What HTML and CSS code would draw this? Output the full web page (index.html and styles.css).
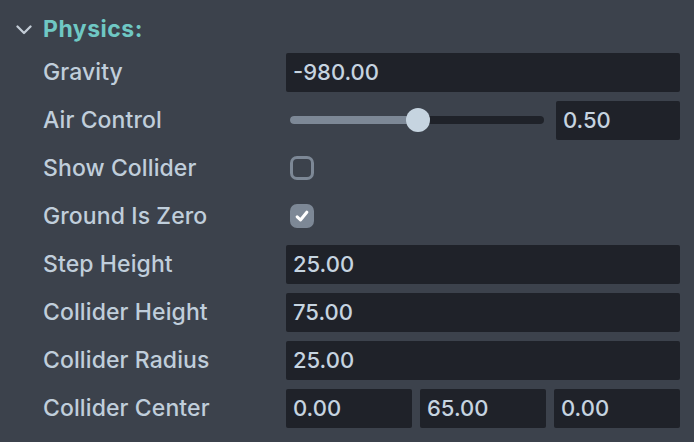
FILE: index.html
```html
<!DOCTYPE html>
<html>
<head>
<meta charset="utf-8">
<link rel="stylesheet" href="styles.css">
</head>
<body>
<div class="panel">
  <div class="header">
    <svg class="chevron" width="16" height="10" viewBox="0 0 16 10"><path d="M1.5 1.5 L8 8 L14.5 1.5" fill="none" stroke="#c3ccd6" stroke-width="2.3" stroke-linecap="round" stroke-linejoin="round"/></svg>
    <span class="title">Physics:</span>
  </div>
  <div class="rows">
    <div class="row">
      <div class="label">Gravity</div>
      <div class="control"><div class="field">-980.00</div></div>
    </div>
    <div class="row">
      <div class="label">Air Control</div>
      <div class="control">
        <div class="slider">
          <div class="track"><div class="fill" style="width:50.4%"></div><div class="thumb" style="left:50.4%"></div></div>
        </div>
        <div class="field small">0.50</div>
      </div>
    </div>
    <div class="row">
      <div class="label">Show Collider</div>
      <div class="control"><div class="check"></div></div>
    </div>
    <div class="row">
      <div class="label">Ground Is Zero</div>
      <div class="control"><div class="check checked"><svg width="14" height="12" viewBox="0 0 14 12"><path d="M2.2 6.8 L5.5 10 L11.8 2.2" fill="none" stroke="#ffffff" stroke-width="3" stroke-linecap="round" stroke-linejoin="round"/></svg></div></div>
    </div>
    <div class="row">
      <div class="label">Step Height</div>
      <div class="control"><div class="field">25.00</div></div>
    </div>
    <div class="row">
      <div class="label">Collider Height</div>
      <div class="control"><div class="field">75.00</div></div>
    </div>
    <div class="row">
      <div class="label">Collider Radius</div>
      <div class="control"><div class="field">25.00</div></div>
    </div>
    <div class="row">
      <div class="label">Collider Center</div>
      <div class="control triple">
        <div class="field">0.00</div>
        <div class="field">65.00</div>
        <div class="field">0.00</div>
      </div>
    </div>
  </div>
</div>
</body>
</html>
```
FILE: styles.css
```css
html, body {
  margin: 0;
  padding: 0;
  background: #3c424c;
}
body {
  font-family: Inter, "Noto Sans", sans-serif;
  color: #c3d1de;
  width: 694px;
  height: 442px;
  overflow: hidden;
}
.panel {
  padding: 12px 14px 0 16px;
}
.header {
  display: flex;
  align-items: center;
  height: 34px;
  margin-bottom: 6px;
}
.chevron {
  display: block;
  margin-right: 11px;
  margin-top: 2px;
}
.title {
  font-weight: 700;
  font-size: 23px;
  letter-spacing: 0.5px;
  color: #6fc8c4;
}
.rows {
  display: flex;
  flex-direction: column;
  gap: 8px;
}
.row {
  display: flex;
  align-items: center;
  height: 40px;
}
.label {
  width: 270px;
  padding-left: 27px;
  box-sizing: border-box;
  font-size: 23px;
  font-weight: 500;
  letter-spacing: 0.1px;
  color: #c0cedb;
}
.control {
  flex: 1;
  display: flex;
  align-items: center;
  gap: 12px;
  height: 40px;
}
.field {
  flex: 1;
  height: 39px;
  box-sizing: border-box;
  background: #1f2229;
  border-radius: 2px;
  padding-left: 7px;
  font-size: 22px;
  font-weight: 500;
  display: flex;
  align-items: center;
  color: #c6d4e0;
}
.field.small {
  flex: 0 0 124px;
}
.triple {
  gap: 8px;
}
.slider {
  flex: 1;
  padding-left: 4px;
}
.track {
  position: relative;
  height: 8px;
  border-radius: 4px;
  background: #1f2229;
}
.fill {
  height: 8px;
  border-radius: 4px;
  background: #7d8896;
}
.thumb {
  position: absolute;
  top: -8px;
  width: 24px;
  height: 24px;
  margin-left: -12px;
  border-radius: 50%;
  background: #c6d4e0;
}
.check {
  margin-left: 4px;
  width: 24px;
  height: 24px;
  box-sizing: border-box;
  border: 3px solid #7d8896;
  border-radius: 7px;
  display: flex;
  align-items: center;
  justify-content: center;
}
.check.checked {
  background: #7d8896;
}
```
